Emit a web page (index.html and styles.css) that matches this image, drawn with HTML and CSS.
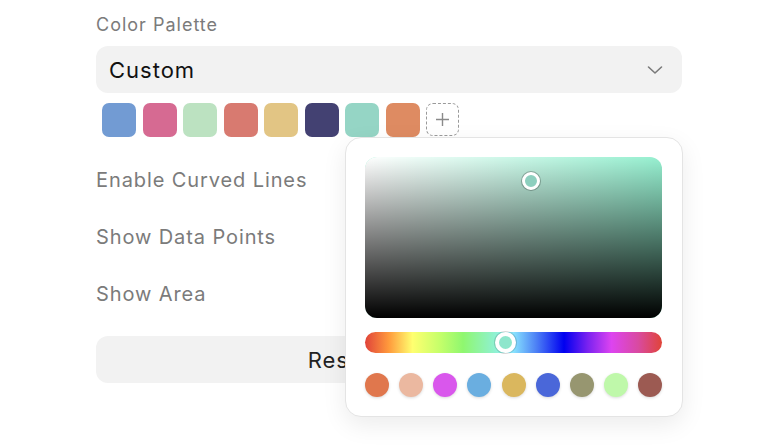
FILE: index.html
```
<!DOCTYPE html>
<html>
<head>
<meta charset="utf-8">
<link rel="stylesheet" href="styles.css">
</head>
<body>
<div class="panel">
  <div class="label">Color Palette</div>
  <div class="select">
    <span>Custom</span>
    <svg class="chev" width="16" height="10" viewBox="0 0 16 10"><path d="M1.5 2 L8 8 L14.5 2" fill="none" stroke="#7a7a7a" stroke-width="1.6" stroke-linecap="round" stroke-linejoin="round"/></svg>
  </div>
  <div class="swatches">
    <div class="sw" style="background:#729bd3"></div>
    <div class="sw" style="background:#d66a92"></div>
    <div class="sw" style="background:#bce2c1"></div>
    <div class="sw" style="background:#d87a70"></div>
    <div class="sw" style="background:#e2c584"></div>
    <div class="sw" style="background:#434172"></div>
    <div class="sw" style="background:#95d5c5"></div>
    <div class="sw" style="background:#de8b62"></div>
    <div class="add"><svg width="15" height="15" viewBox="0 0 15 15"><path d="M7.5 1 V14 M1 7.5 H14" stroke="#8a8a8a" stroke-width="1.4"/></svg></div>
  </div>
  <div class="row">Enable Curved Lines</div>
  <div class="row">Show Data Points</div>
  <div class="row">Show Area</div>
  <div class="btn">Reset Settings</div>
</div>
<div class="popover">
  <div class="sv">
    <div class="sv-white"></div>
    <div class="sv-black"></div>
    <div class="sv-thumb"></div>
  </div>
  <div class="hue">
    <div class="hue-thumb"></div>
  </div>
  <div class="presets">
    <div class="dot" style="background:#e0774d"></div>
    <div class="dot" style="background:#ebb8a0"></div>
    <div class="dot" style="background:#d957ec"></div>
    <div class="dot" style="background:#6aaee0"></div>
    <div class="dot" style="background:#dab75e"></div>
    <div class="dot" style="background:#4a67d9"></div>
    <div class="dot" style="background:#979670"></div>
    <div class="dot" style="background:#bff8aa"></div>
    <div class="dot" style="background:#9c5a52"></div>
  </div>
</div>
</body>
</html>
```
FILE: styles.css
```
html, body {
  margin: 0;
  padding: 0;
  background: #ffffff;
  font-family: Inter, "Noto Sans", "Liberation Sans", sans-serif;
}
.panel {
  width: 586px;
  margin-left: 96px;
  padding-top: 14px;
}
.label {
  font-size: 18px;
  line-height: 22px;
  letter-spacing: 1px;
  color: #7b7b7b;
}
.select {
  margin-top: 10px;
  height: 47px;
  border-radius: 12px;
  background: #f2f2f2;
  display: flex;
  align-items: center;
  justify-content: space-between;
  padding: 0 19px 0 13px;
  box-sizing: border-box;
  font-size: 22px;
  letter-spacing: 1px;
  color: #111;
}
.chev { display: block; }
.swatches {
  margin-top: 10px;
  padding-left: 6px;
  display: flex;
  gap: 6.5px;
  height: 34px;
}
.sw {
  width: 34px;
  height: 34px;
  border-radius: 7px;
}
.add {
  width: 33px;
  height: 33px;
  box-sizing: border-box;
  border: 1.5px dashed #9a9a9a;
  border-radius: 7px;
  display: flex;
  align-items: center;
  justify-content: center;
}
.row {
  height: 57px;
  display: flex;
  align-items: center;
  font-size: 20px;
  letter-spacing: 0.9px;
  color: #7b7b7b;
}
.swatches + .row { margin-top: 14px; }
.btn {
  margin-top: 14px;
  height: 47px;
  border-radius: 12px;
  background: #f2f2f2;
  display: flex;
  align-items: center;
  justify-content: center;
  font-size: 22px;
  letter-spacing: 1px;
  color: #222;
}
.popover {
  position: absolute;
  left: 345px;
  top: 137px;
  width: 338px;
  height: 280px;
  box-sizing: border-box;
  padding: 19px 20px 19px 19px;
  background: #fff;
  border: 1px solid #e4e4e4;
  border-radius: 16px;
  box-shadow: 0 8px 24px rgba(0,0,0,0.08);
}
.sv {
  position: relative;
  height: 161px;
  border-radius: 12px;
  overflow: hidden;
  background: #96f0d0;
}
.sv-white {
  position: absolute;
  inset: 0;
  background: linear-gradient(to right, #ffffff, rgba(255,255,255,0));
}
.sv-black {
  position: absolute;
  inset: 0;
  background: linear-gradient(to bottom, rgba(0,0,0,0), #000000);
}
.sv-thumb {
  position: absolute;
  left: 157px;
  top: 15px;
  width: 18px;
  height: 18px;
  box-sizing: border-box;
  border-radius: 50%;
  border: 3px solid #fff;
  background: #8dcfbe;
  box-shadow: 0 0 0 1px rgba(0,0,0,0.25);
}
.hue {
  position: relative;
  margin-top: 14px;
  height: 21px;
  border-radius: 11px;
  background: linear-gradient(to right, #e0433a 0%, #ff9a3c 8%, #ffff70 16%, #c6ff6a 25%, #8ff76f 33%, #8ff2c2 42%, #90f0ff 49%, #4a7cf5 58%, #0000f0 67%, #7a22f0 75%, #dd44f0 83%, #d94aa0 92%, #e04438 100%);
}
.hue-thumb {
  position: absolute;
  left: 130px;
  top: 0px;
  width: 21px;
  height: 21px;
  box-sizing: border-box;
  border-radius: 50%;
  border: 4px solid #fff;
  background: #8ee6cc;
  box-shadow: 0 0 0 1px rgba(0,0,0,0.15);
}
.presets {
  margin-top: 20px;
  display: flex;
  justify-content: space-between;
}
.dot {
  width: 24px;
  height: 24px;
  border-radius: 50%;
  box-shadow: 0 1px 3px rgba(0,0,0,0.15);
}
```
